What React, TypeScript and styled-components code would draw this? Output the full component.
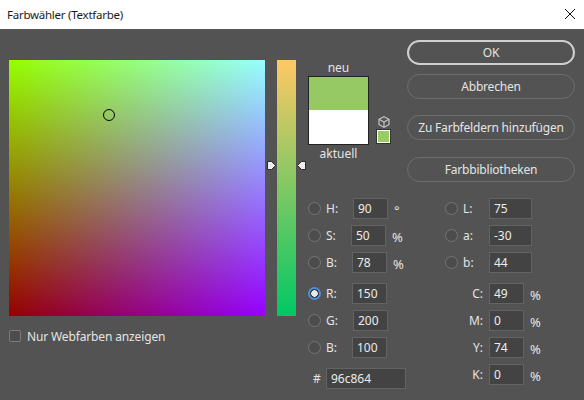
import styled, { createGlobalStyle } from "styled-components";

const fieldSize = 256;
const textColor = "#e4e4e4";

const GlobalStyle = createGlobalStyle`
  html, body {
    margin: 0;
    padding: 0;
    width: 584px;
    height: 400px;
    overflow: hidden;
    background: #535353;
    font-family: "Noto Sans", "Liberation Sans", sans-serif;
  }
`;

const hsb = [
  { id: "H", label: "H:", value: "90", unit: "°", labelWidth: 27 },
  { id: "S", label: "S:", value: "50", unit: "%", labelWidth: 25 },
  { id: "Br", label: "B:", value: "78", unit: "%", labelWidth: 26 },
];

const rgb = [
  { id: "R", label: "R:", value: "150", selected: true, labelWidth: 26 },
  { id: "G", label: "G:", value: "200", labelWidth: 27 },
  { id: "Bl", label: "B:", value: "100", labelWidth: 26 },
];

const lab = [
  { id: "L", label: "L:", value: "75" },
  { id: "a", label: "a:", value: "-30" },
  { id: "b", label: "b:", value: "44" },
];

const cmyk = [
  { id: "C", label: "C:", value: "49" },
  { id: "M", label: "M:", value: "0" },
  { id: "Y", label: "Y:", value: "74" },
  { id: "K", label: "K:", value: "0" },
];

export default function App() {
  return (
    <Dialog>
      <GlobalStyle />
      <TitleBar>
        <Title>Farbwähler (Textfarbe)</Title>
        <CloseIcon width="10" height="10" viewBox="0 0 10 10">
          <path d="M0 0L10 10M10 0L0 10" stroke="#111" strokeWidth="1" fill="none" />
        </CloseIcon>
      </TitleBar>
      <Body>
        <PickerColumn>
          <ColorField>
            <Marker />
          </ColorField>
          <WebOnly>
            <CheckBox />
            <span>Nur Webfarben anzeigen</span>
          </WebOnly>
        </PickerColumn>
        <StripWrap>
          <LeftArrow width="9" height="9" viewBox="0 0 9 9">
            <path d="M0.5 0.5H4.5L8.5 4.5L4.5 8.5H0.5Z" fill="#eee" stroke="#2c2c2c" />
          </LeftArrow>
          <RightArrow width="9" height="9" viewBox="0 0 9 9">
            <path d="M8.5 0.5H4.5L0.5 4.5L4.5 8.5H8.5Z" fill="#eee" stroke="#2c2c2c" />
          </RightArrow>
        </StripWrap>
        <Controls>
          <TopRow>
            <Preview>
              <PreviewLabel>neu</PreviewLabel>
              <span />
              <Swatches>
                <NewColor />
                <OldColor />
              </Swatches>
              <Gamut>
                <svg width="12" height="12" viewBox="0 0 12 12" fill="none" stroke="#c4c4c4" strokeWidth="1.2">
                  <path d="M6 0.7L11 3.3V8.7L6 11.3L1 8.7V3.3Z" />
                  <path d="M1 3.3L6 6L11 3.3M6 6V11.3" />
                </svg>
                <WebSwatch />
              </Gamut>
              <PreviewLabel>aktuell</PreviewLabel>
            </Preview>
            <Buttons>
              <Button $primary>OK</Button>
              <Button $top={9}>Abbrechen</Button>
              <Button $top={16}>Zu Farbfeldern hinzufügen</Button>
              <Button $top={17}>Farbbibliotheken</Button>
            </Buttons>
          </TopRow>
          <Form>
            <FormColumn>
              <Group>
                {hsb.map((f) => (
                  <Row key={f.id}>
                    <Radio />
                    <FieldLabel $width={f.labelWidth}>{f.label}</FieldLabel>
                    <Input $width={35}>{f.value}</Input>
                    <Unit>{f.unit}</Unit>
                  </Row>
                ))}
              </Group>
              <Group>
                {rgb.map((f) => (
                  <Row key={f.id}>
                    <Radio $selected={f.selected} />
                    <FieldLabel $width={f.labelWidth}>{f.label}</FieldLabel>
                    <Input $width={35}>{f.value}</Input>
                  </Row>
                ))}
              </Group>
              <Row>
                <Hash>#</Hash>
                <Input $width={80}>96c864</Input>
              </Row>
            </FormColumn>
            <FormColumn>
              <Group>
                {lab.map((f) => (
                  <Row key={f.id}>
                    <Radio />
                    <FieldLabel $width={26}>{f.label}</FieldLabel>
                    <Input $width={43}>{f.value}</Input>
                  </Row>
                ))}
              </Group>
              <Group>
                {cmyk.map((f) => (
                  <Row key={f.id}>
                    <CmykLabel>{f.label}</CmykLabel>
                    <Input $width={35}>{f.value}</Input>
                    <Unit>%</Unit>
                  </Row>
                ))}
              </Group>
            </FormColumn>
          </Form>
        </Controls>
      </Body>
    </Dialog>
  );
}

const Dialog = styled.div`
  width: 584px;
  height: 400px;
  display: flex;
  flex-direction: column;
  background: #535353;
  color: ${textColor};
  font-size: 12px;
`;

const TitleBar = styled.header`
  height: 29px;
  flex: none;
  display: flex;
  align-items: center;
  justify-content: space-between;
  padding: 0 9px 1px 7px;
  box-sizing: border-box;
  background: #fff;
`;

const Title = styled.div`
  color: #1a1a1a;
  font-size: 11.5px;
  letter-spacing: -0.25px;
`;

const CloseIcon = styled.svg`
  display: block;
`;

const Body = styled.main`
  flex: 1;
  display: flex;
  align-items: flex-start;
  padding-left: 9px;
`;

const PickerColumn = styled.div`
  width: ${fieldSize}px;
  margin-top: 31px;
`;

const ColorField = styled.div`
  position: relative;
  height: ${fieldSize}px;
  background-color: rgb(150, 0, 0);
  background-image: linear-gradient(to right, #000, #00f),
    linear-gradient(to bottom, #0f0, #000);
  background-blend-mode: screen;
`;

const Marker = styled.div`
  position: absolute;
  left: 94px;
  top: 49px;
  width: 12px;
  height: 12px;
  box-sizing: border-box;
  border: 1px solid #000;
  border-radius: 50%;
`;

const WebOnly = styled.label`
  display: flex;
  align-items: center;
  gap: 6px;
  height: 12px;
  margin-top: 14px;
  letter-spacing: -0.14px;
`;

const CheckBox = styled.div`
  width: 12px;
  height: 12px;
  box-sizing: border-box;
  border: 1px solid #7c7c7c;
  border-radius: 2px;
  background: #4c4c4c;
`;

const StripWrap = styled.div`
  position: relative;
  flex: none;
  width: 19px;
  height: ${fieldSize}px;
  margin: 31px 12px 0;
  background: linear-gradient(to bottom, rgb(255, 200, 100), rgb(0, 200, 100));
`;

const LeftArrow = styled.svg`
  position: absolute;
  left: -10px;
  top: 101px;
`;

const RightArrow = styled.svg`
  position: absolute;
  right: -10px;
  top: 101px;
`;

const Controls = styled.div`
  flex: 1;
  display: flex;
  flex-direction: column;
`;

const TopRow = styled.div`
  display: flex;
  align-items: flex-start;
  height: 152px;
`;

const Preview = styled.div`
  display: grid;
  grid-template-columns: 61px 13px;
  grid-template-rows: 16px 69px 18px;
  column-gap: 8px;
  margin-top: 31px;
  width: 82px;
`;

const PreviewLabel = styled.div`
  text-align: center;
  line-height: 16px;

  &:last-child {
    margin-top: 1px;
  }
`;

const Swatches = styled.div`
  display: flex;
  flex-direction: column;
  border: 1px solid #222;
`;

const NewColor = styled.div`
  height: 33px;
  background: #96c864;
`;

const OldColor = styled.div`
  flex: 1;
  background: #fff;
`;

const Gamut = styled.div`
  display: flex;
  flex-direction: column;
  justify-content: flex-end;
  align-items: center;
  gap: 2px;
  padding-bottom: 2px;

  svg {
    display: block;
  }
`;

const WebSwatch = styled.div`
  width: 13px;
  height: 13px;
  box-sizing: border-box;
  border: 1px solid #fff;
  box-shadow: 0 0 0 1px #333;
  background: #99cc66;
`;

const Buttons = styled.div`
  width: 168px;
  margin: 11px 0 0 17px;
  display: flex;
  flex-direction: column;
`;

const Button = styled.button<{ $primary?: boolean; $top?: number }>`
  height: 25px;
  margin-top: ${(p) => p.$top ?? 0}px;
  padding: 0;
  box-sizing: border-box;
  border-radius: 12.5px;
  border: ${(p) => (p.$primary ? "2px solid #cfcfcf" : "1px solid #6e6e6e")};
  background: transparent;
  color: ${textColor};
  font-family: inherit;
  font-size: 12px;
  letter-spacing: -0.2px;
`;

const Form = styled.div`
  display: flex;
  margin-top: 17px;
`;

const FormColumn = styled.div`
  width: 137px;
  display: flex;
  flex-direction: column;
  gap: 10px;
`;

const Group = styled.div`
  display: flex;
  flex-direction: column;
  gap: 6px;
`;

const Row = styled.div`
  display: flex;
  align-items: center;
  height: 21px;
`;

const Radio = styled.div<{ $selected?: boolean }>`
  width: 13px;
  height: 13px;
  flex: none;
  margin-right: 5px;
  box-sizing: border-box;
  border-radius: 50%;
  border: ${(p) => (p.$selected ? "2px solid #4b8fdc" : "1px solid #767676")};
  background: ${(p) =>
    p.$selected
      ? "radial-gradient(circle, #e8e8e8 0 3px, #3a3a3a 3.5px)"
      : "#4c4c4c"};
`;

const FieldLabel = styled.div<{ $width: number }>`
  width: ${(p) => p.$width}px;
  flex: none;
`;

const Input = styled.div<{ $width: number }>`
  width: ${(p) => p.$width}px;
  height: 21px;
  flex: none;
  box-sizing: border-box;
  padding-left: 4px;
  line-height: 19px;
  border: 1px solid #636363;
  background: #434343;
  color: #ececec;
`;

const Unit = styled.div`
  margin: 2px 0 0 6px;
  font-size: 13px;
`;

const Hash = styled.div`
  width: 18px;
  padding-left: 5px;
  box-sizing: border-box;
  flex: none;
`;

const CmykLabel = styled.div`
  width: 44px;
  padding-right: 6px;
  box-sizing: border-box;
  text-align: right;
  flex: none;
`;
